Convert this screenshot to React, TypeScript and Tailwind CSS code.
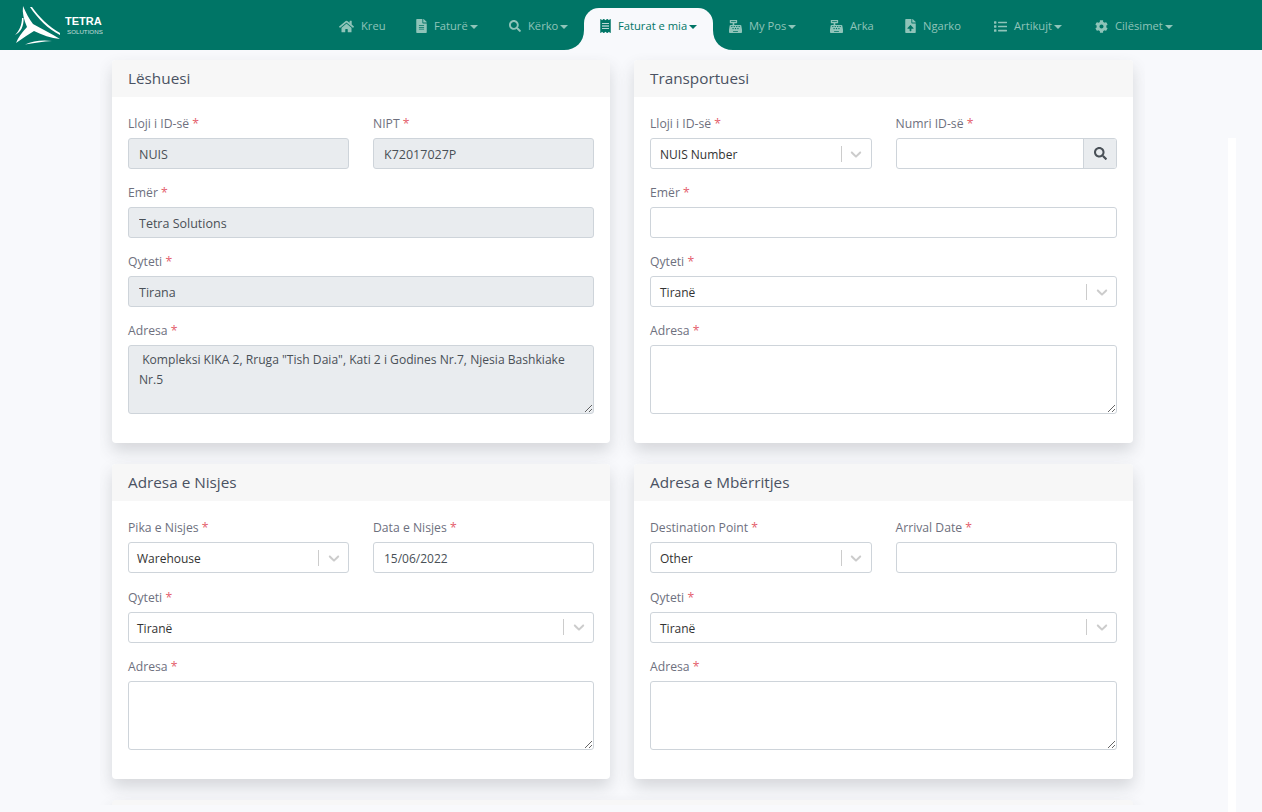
import type { ReactNode } from "react";
import {
  FaCashRegister,
  FaCog,
  FaFileAlt,
  FaFileUpload,
  FaHome,
  FaList,
  FaReceipt,
  FaSearch,
} from "react-icons/fa";

const navItems = [
  { label: "Kreu", width: "w-[77px]", icon: <FaHome size={15} /> },
  { label: "Faturë", width: "w-[93px]", icon: <FaFileAlt size={14} className="w-[11px]" />, caret: true },
  { label: "Kërko", width: "w-[91px]", icon: <FaSearch size={12} />, caret: true },
  { label: "Faturat e mia", width: "w-[129px]", icon: <FaReceipt size={14} className="w-[11px]" />, caret: true, active: true },
  { label: "My Pos", width: "w-[101px]", icon: <FaCashRegister size={13} />, caret: true },
  { label: "Arka", width: "w-[75px]", icon: <FaCashRegister size={13} /> },
  { label: "Ngarko", width: "w-[89px]", icon: <FaFileUpload size={14} className="w-[11px]" /> },
  { label: "Artikujt", width: "w-[101px]", icon: <FaList size={13} />, caret: true },
  { label: "Cilësimet", width: "w-[110px]", icon: <FaCog size={13} />, caret: true },
];

function Logo() {
  return (
    <div className="flex items-start font-['Liberation_Sans',sans-serif]">
      <svg width="46" height="39" viewBox="0 0 46 39" fill="white">
        <path d="M8 0 C11 7 14 13 18 18 C27 23 37 28 45 33 C36 32 27 29 19 25 C14 28 8 32 1 37 C3 32 7 26 12 21 C9 14 7 7 8 0 Z" />
        <path d="M17 1 C24 11 34 21 45 27 L45 29 C33 23 23 13 15 1 Z" />
        <path d="M7 12 C7 19 4 25 0 29 C6 26 9 20 8.5 12 Z" />
        <path d="M10 38.5 C18 35 27 33.5 37 35 C28 35.5 18 37 10 38.5 Z" />
      </svg>
      <div className="ml-1 mt-[10px] flex flex-col text-white">
        <span className="text-[11px] leading-[11px] font-bold">TETRA</span>
        <span className="ml-[2px] text-[6.2px] leading-[10px] opacity-75">SOLUTIONS</span>
      </div>
    </div>
  );
}

function Caret() {
  return <span className="mt-[2px] border-x-[4px] border-t-[4px] border-x-transparent border-t-current" />;
}

function NavBar() {
  return (
    <nav className="flex h-[50px] bg-[#007566]">
      <div className="w-[323px] shrink-0 pl-[15px] pt-[6px]">
        <Logo />
      </div>
      <ul className="flex items-stretch">
        {navItems.map((item) =>
          item.active ? (
            <li
              key={item.label}
              className={`relative mt-2 flex items-center gap-[7px] rounded-t-[15px] bg-[#f8f9fc] pl-4 pb-[6px] text-[#007566] ${item.width}`}
            >
              <svg className="absolute -left-5 bottom-0" width="20" height="20" viewBox="0 0 20 20" fill="#f8f9fc">
                <path d="M20 0 C20 12 12 20 0 20 L20 20 Z" />
              </svg>
              <svg className="absolute -right-5 bottom-0" width="20" height="20" viewBox="0 0 20 20" fill="#f8f9fc">
                <path d="M0 0 C0 12 8 20 20 20 L0 20 Z" />
              </svg>
              {item.icon}
              <span className="flex items-center gap-[2px] text-[11.2px]">
                {item.label}
                <Caret />
              </span>
            </li>
          ) : (
            <li key={item.label} className={`flex items-center gap-[7px] pl-4 pt-[2px] text-[#8fc4b9] ${item.width}`}>
              {item.icon}
              <span className="flex items-center gap-[2px] text-[11.2px]">
                {item.label}
                {item.caret && <Caret />}
              </span>
            </li>
          ),
        )}
      </ul>
    </nav>
  );
}

function Field({ label, children }: { label: string; children: ReactNode }) {
  return (
    <label className="block min-w-0 flex-1">
      <span className="block h-[22px] text-[12.2px] leading-[16px] text-[#6e707e]">
        {label} <span className="text-[#e4606d]">*</span>
      </span>
      {children}
    </label>
  );
}

function TextInput({ value = "", disabled = false }: { value?: string; disabled?: boolean }) {
  return (
    <input
      readOnly
      value={value}
      className={`block h-[31px] w-full rounded-[3px] border border-[#ced4da] px-[10px] pt-[1px] text-[#495057] outline-none ${
        disabled ? "bg-[#e9ecef] text-[12.5px]" : "bg-white text-xs"
      }`}
    />
  );
}

function TextArea({ value = "", disabled = false }: { value?: string; disabled?: boolean }) {
  return (
    <textarea
      readOnly
      value={value}
      className={`block h-[69px] w-full rounded-[3px] border border-[#ced4da] px-[10px] pt-1 text-[12.1px] leading-[20px] text-[#495057] outline-none ${
        disabled ? "bg-[#e9ecef]" : "bg-white"
      }`}
    />
  );
}

function SelectBox({ value, inset = false }: { value: string; inset?: boolean }) {
  return (
    <div
      className={`flex h-[31px] items-center rounded-[3px] border border-[#ced4da] bg-white text-xs text-[#333] ${
        inset ? "pl-2" : "pl-[9px]"
      }`}
    >
      <span className="flex-1 pt-[3px]">{value}</span>
      <span className="h-4 w-px bg-[#ccc]" />
      <span className="flex w-[29px] justify-center">
        <svg width="18" height="18" viewBox="0 0 20 20" fill="#ccc">
          <path d="M4.516 7.548c0.436-0.446 1.043-0.481 1.576 0l3.908 3.747 3.908-3.747c0.533-0.481 1.141-0.446 1.574 0 0.436 0.445 0.408 1.197 0 1.615-0.406 0.418-4.695 4.502-4.695 4.502-0.217 0.223-0.502 0.335-0.787 0.335s-0.57-0.112-0.789-0.335c0 0-4.287-4.084-4.695-4.502s-0.436-1.17 0-1.615z" />
        </svg>
      </span>
    </div>
  );
}

function SearchInput() {
  return (
    <div className="flex h-[31px] overflow-hidden rounded-[3px] border border-[#ced4da] bg-white">
      <div className="flex-1" />
      <div className="flex w-[33px] items-center justify-center border-l border-[#ced4da] bg-[#e9ecef] text-[#495057]">
        <FaSearch size={13} />
      </div>
    </div>
  );
}

function Card({ title, children }: { title: string; children: ReactNode }) {
  return (
    <section className="overflow-hidden rounded-[4px] bg-white shadow-[0_8px_16px_rgba(58,59,69,0.18)]">
      <h2 className="flex h-[37px] items-center bg-[#f7f7f7] px-4 pb-[1px] text-[15.3px] font-medium text-[#4a5262]">{title}</h2>
      <div className="flex flex-col gap-[16.1px] px-4 pt-[19px] pb-[29px]">{children}</div>
    </section>
  );
}

function Row({ children }: { children: ReactNode }) {
  return <div className="flex gap-6">{children}</div>;
}

export default function App() {
  return (
    <div className="relative h-[812px] overflow-hidden bg-[#f8f9fc] font-['Open_Sans','Liberation_Sans',sans-serif]">
      <NavBar />
      <main className="ml-[100px] h-[755px] w-[1045px] overflow-hidden px-3 pt-[10px]">
        <div className="grid grid-cols-[498px_499px] gap-x-6 gap-y-[21.15px]">
          <Card title="Lëshuesi">
            <Row>
              <Field label="Lloji i ID-së"><TextInput value="NUIS" disabled /></Field>
              <Field label="NIPT"><TextInput value="K72017027P" disabled /></Field>
            </Row>
            <Field label="Emër"><TextInput value="Tetra Solutions" disabled /></Field>
            <Field label="Qyteti"><TextInput value="Tirana" disabled /></Field>
            <Field label="Adresa">
              <TextArea value=" Kompleksi KIKA 2, Rruga &quot;Tish Daia&quot;, Kati 2 i Godines Nr.7, Njesia Bashkiake Nr.5" disabled />
            </Field>
          </Card>
          <Card title="Transportuesi">
            <Row>
              <Field label="Lloji i ID-së"><SelectBox value="NUIS Number" /></Field>
              <Field label="Numri ID-së"><SearchInput /></Field>
            </Row>
            <Field label="Emër"><TextInput /></Field>
            <Field label="Qyteti"><SelectBox value="Tiranë" /></Field>
            <Field label="Adresa"><TextArea /></Field>
          </Card>
          <Card title="Adresa e Nisjes">
            <Row>
              <Field label="Pika e Nisjes"><SelectBox value="Warehouse" inset /></Field>
              <Field label="Data e Nisjes"><TextInput value="15/06/2022" /></Field>
            </Row>
            <Field label="Qyteti"><SelectBox value="Tiranë" inset /></Field>
            <Field label="Adresa"><TextArea /></Field>
          </Card>
          <Card title="Adresa e Mbërritjes">
            <Row>
              <Field label="Destination Point"><SelectBox value="Other" /></Field>
              <Field label="Arrival Date"><TextInput /></Field>
            </Row>
            <Field label="Qyteti"><SelectBox value="Tiranë" /></Field>
            <Field label="Adresa"><TextArea /></Field>
          </Card>
          <div className="col-span-2 h-8 rounded-[4px] bg-[#f7f7f7] shadow-[0_8px_16px_rgba(58,59,69,0.18)]" />
        </div>
      </main>
      <div className="absolute top-[138px] bottom-0 left-[1228px] w-2 bg-white" />
    </div>
  );
}
